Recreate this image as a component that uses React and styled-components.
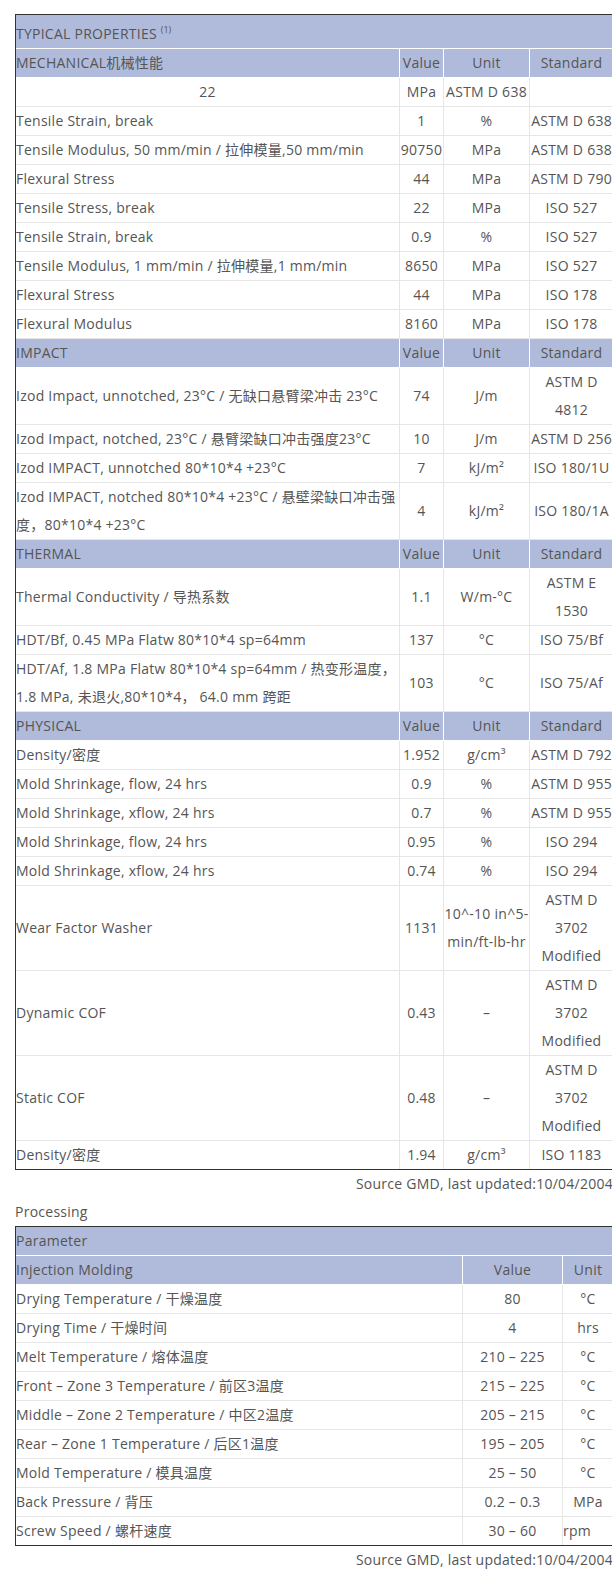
import React from "react";
import styled, { createGlobalStyle } from "styled-components";

const GlobalStyle = createGlobalStyle`
  html, body {
    margin: 0;
    padding: 0;
    background: #fff;
    overflow-x: hidden;
  }
  body {
    font-family: "Open Sans", "Noto Sans CJK SC", sans-serif;
    font-size: 14px;
    letter-spacing: 0.25px;
    line-height: 28px;
    color: #555;
  }
`;

const Page = styled.div`
  width: 598px;
  padding: 14px 0 0 15px;
`;

const Table = styled.table`
  width: 598px;
  table-layout: fixed;
  border-collapse: separate;
  border-spacing: 0;
  border: 1px solid #333;

  tr:last-child td {
    border-bottom: none;
  }
`;

const Title = styled.th`
  background: #b0bbdb;
  text-align: left;
  font-weight: normal;
  padding: 5px 0 0 0;
  border-bottom: 1px solid #fff;

  sup {
    font-size: 9px;
    line-height: 0;
    letter-spacing: 0;
  }
`;

const Head = styled.th`
  background: #b0bbdb;
  font-weight: normal;
  padding: 0;
  text-align: ${(p) => p.$align || "center"};
  border-right: 1px solid #fff;
  border-bottom: 1px solid #fff;
`;

const Cell = styled.td`
  padding: 0;
  text-align: ${(p) => p.$align || "center"};
  border-right: 1px solid #e6e6e6;
  border-bottom: 1px solid #e6e6e6;
`;

const Note = styled.div`
  text-align: right;
`;

const Caption = styled.div``;

const props1 = [
  {
    head: "MECHANICAL机械性能",
    rows: [
      ["Tensile Strain, break", "1", "%", "ASTM D 638"],
      ["Tensile Modulus, 50 mm/min / 拉伸模量,50 mm/min", "90750", "MPa", "ASTM D 638"],
      ["Flexural Stress", "44", "MPa", "ASTM D 790"],
      ["Tensile Stress, break", "22", "MPa", "ISO 527"],
      ["Tensile Strain, break", "0.9", "%", "ISO 527"],
      ["Tensile Modulus, 1 mm/min / 拉伸模量,1 mm/min", "8650", "MPa", "ISO 527"],
      ["Flexural Stress", "44", "MPa", "ISO 178"],
      ["Flexural Modulus", "8160", "MPa", "ISO 178"],
    ],
  },
  {
    head: "IMPACT",
    rows: [
      ["Izod Impact, unnotched, 23°C / 无缺口悬臂梁冲击 23°C", "74", "J/m", "ASTM D 4812"],
      ["Izod Impact, notched, 23°C / 悬臂梁缺口冲击强度23°C", "10", "J/m", "ASTM D 256"],
      ["Izod IMPACT, unnotched 80*10*4 +23°C", "7", "kJ/m²", "ISO 180/1U"],
      ["Izod IMPACT, notched 80*10*4 +23°C / 悬壁梁缺口冲击强度，80*10*4 +23°C", "4", "kJ/m²", "ISO 180/1A"],
    ],
  },
  {
    head: "THERMAL",
    rows: [
      ["Thermal Conductivity / 导热系数", "1.1", "W/m-°C", "ASTM E 1530"],
      ["HDT/Bf, 0.45 MPa Flatw 80*10*4 sp=64mm", "137", "°C", "ISO 75/Bf"],
      ["HDT/Af, 1.8 MPa Flatw 80*10*4 sp=64mm / 热变形温度，1.8 MPa, 未退火,80*10*4， 64.0 mm 跨距", "103", "°C", "ISO 75/Af"],
    ],
  },
  {
    head: "PHYSICAL",
    rows: [
      ["Density/密度", "1.952", "g/cm³", "ASTM D 792"],
      ["Mold Shrinkage, flow, 24 hrs", "0.9", "%", "ASTM D 955"],
      ["Mold Shrinkage, xflow, 24 hrs", "0.7", "%", "ASTM D 955"],
      ["Mold Shrinkage, flow, 24 hrs", "0.95", "%", "ISO 294"],
      ["Mold Shrinkage, xflow, 24 hrs", "0.74", "%", "ISO 294"],
      ["Wear Factor Washer", "1131", "10^-10 in^5-min/ft-lb-hr", "ASTM D 3702 Modified"],
      ["Dynamic COF", "0.43", "–", "ASTM D 3702 Modified"],
      ["Static COF", "0.48", "–", "ASTM D 3702 Modified"],
      ["Density/密度", "1.94", "g/cm³", "ISO 1183"],
    ],
  },
];

const processing = [
  ["Drying Temperature / 干燥温度", "80", "°C"],
  ["Drying Time / 干燥时间", "4", "hrs"],
  ["Melt Temperature / 熔体温度", "210 – 225", "°C"],
  ["Front – Zone 3 Temperature / 前区3温度", "215 – 225", "°C"],
  ["Middle – Zone 2 Temperature / 中区2温度", "205 – 215", "°C"],
  ["Rear – Zone 1 Temperature / 后区1温度", "195 – 205", "°C"],
  ["Mold Temperature / 模具温度", "25 – 50", "°C"],
  ["Back Pressure / 背压", "0.2 – 0.3", "MPa"],
  ["Screw Speed / 螺杆速度", "30 – 60", "rpm", "left"],
];

export default function App() {
  return (
    <>
      <GlobalStyle />
      <Page>
        <Table>
          <colgroup>
            <col style={{ width: 384 }} />
            <col style={{ width: 44 }} />
            <col style={{ width: 86 }} />
            <col style={{ width: 84 }} />
          </colgroup>
          <tbody>
            <tr>
              <Title colSpan={4}>
                TYPICAL PROPERTIES <sup>(1)</sup>
              </Title>
            </tr>
            {props1.map((sec, i) => (
              <React.Fragment key={sec.head}>
                <tr>
                  <Head $align="left">{sec.head}</Head>
                  <Head>Value</Head>
                  <Head>Unit</Head>
                  <Head>Standard</Head>
                </tr>
                {i === 0 && (
                  <tr>
                    <Cell>22</Cell>
                    <Cell>MPa</Cell>
                    <Cell>ASTM D 638</Cell>
                    <Cell />
                  </tr>
                )}
                {sec.rows.map((r, j) => (
                  <tr key={j}>
                    <Cell $align="left">{r[0]}</Cell>
                    <Cell>{r[1]}</Cell>
                    <Cell>{r[2]}</Cell>
                    <Cell>{r[3]}</Cell>
                  </tr>
                ))}
              </React.Fragment>
            ))}
          </tbody>
        </Table>
        <Note>Source GMD, last updated:10/04/2004</Note>
        <Caption>Processing</Caption>
        <Table>
          <colgroup>
            <col style={{ width: 447 }} />
            <col style={{ width: 100 }} />
            <col style={{ width: 51 }} />
          </colgroup>
          <tbody>
            <tr>
              <Head $align="left" colSpan={3}>Parameter</Head>
            </tr>
            <tr>
              <Head $align="left">Injection Molding</Head>
              <Head>Value</Head>
              <Head>Unit</Head>
            </tr>
            {processing.map((r, j) => (
              <tr key={j}>
                <Cell $align="left">{r[0]}</Cell>
                <Cell>{r[1]}</Cell>
                <Cell $align={r[3]}>{r[2]}</Cell>
              </tr>
            ))}
          </tbody>
        </Table>
        <Note>Source GMD, last updated:10/04/2004</Note>
      </Page>
    </>
  );
}
